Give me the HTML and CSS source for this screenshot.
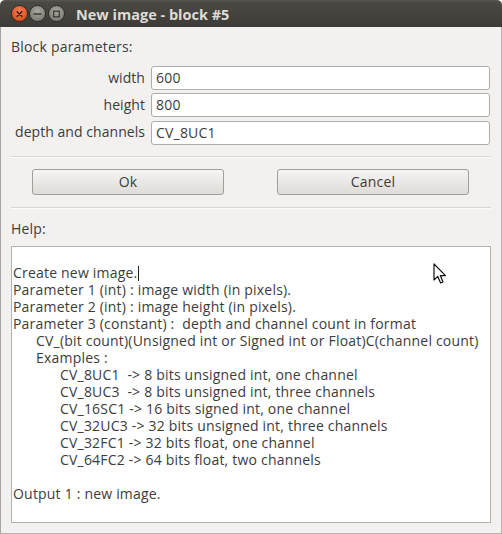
FILE: index.html
```html
<!DOCTYPE html>
<html>
<head>
<meta charset="utf-8">
<link rel="stylesheet" href="styles.css">
</head>
<body>
<div class="window">
  <div class="titlebar">
    <div class="controls">
      <span class="ctl close"><svg width="16" height="16" viewBox="0 0 16 16"><path d="M5.5 5.5 L10.5 10.5 M10.5 5.5 L5.5 10.5" stroke="#3a1a10" stroke-width="1.6" stroke-linecap="round"/></svg></span>
      <span class="ctl mini"><svg width="16" height="16" viewBox="0 0 16 16"><path d="M4.5 8 H11.5" stroke="#3c3b37" stroke-width="1.8" stroke-linecap="round"/></svg></span>
      <span class="ctl maxi"><svg width="16" height="16" viewBox="0 0 16 16"><rect x="5" y="5" width="6" height="6" fill="none" stroke="#3c3b37" stroke-width="1.4"/></svg></span>
    </div>
    <div class="title">New image - block #5</div>
  </div>
  <div class="content">
    <div class="section-label">Block parameters:</div>
    <div class="form">
      <label class="lbl">width</label><div class="input">600</div>
      <label class="lbl">height</label><div class="input">800</div>
      <label class="lbl">depth and channels</label><div class="input">CV_8UC1</div>
    </div>
    <div class="sep"></div>
    <div class="buttons">
      <div class="btn">Ok</div>
      <div class="btn">Cancel</div>
    </div>
    <div class="sep"></div>
    <div class="section-label help-label">Help:</div>
    <div class="helpbox">
      <div class="line">Create new image.<span class="caret"></span></div>
      <div class="line">Parameter 1 (int) : image width (in pixels).</div>
      <div class="line">Parameter 2 (int) : image height (in pixels).</div>
      <div class="line">Parameter 3 (constant) :&nbsp; depth and channel count in format</div>
      <div class="line ind1">CV_(bit count)(Unsigned int or Signed int or Float)C(channel count)</div>
      <div class="line ind1">Examples :</div>
      <div class="line ind2">CV_8UC1&nbsp; -&gt; 8 bits unsigned int, one channel</div>
      <div class="line ind2">CV_8UC3&nbsp; -&gt; 8 bits unsigned int, three channels</div>
      <div class="line ind2">CV_16SC1 -&gt; 16 bits signed int, one channel</div>
      <div class="line ind2">CV_32UC3 -&gt; 32 bits unsigned int, three channels</div>
      <div class="line ind2">CV_32FC1 -&gt; 32 bits float, one channel</div>
      <div class="line ind2">CV_64FC2 -&gt; 64 bits float, two channels</div>
      <div class="line">&nbsp;</div>
      <div class="line">Output 1 : new image.</div>
      <svg class="pointer" width="14" height="22" viewBox="0 0 14 22"><path d="M1 1 L1 17 L4.8 13.4 L7.6 20 L10 19 L7.3 12.6 L12.5 12.6 Z" fill="#ffffff" stroke="#111" stroke-width="1.2" stroke-linejoin="round"/></svg>
    </div>
  </div>
</div>
</body>
</html>
```
FILE: styles.css
```css
* { box-sizing: border-box; }
html, body { margin: 0; padding: 0; background: #ffffff; }
body {
  font-family: "Open Sans", "Noto Sans", "DejaVu Sans", sans-serif;
  font-size: 14px;
  letter-spacing: 0.2px;
  color: #3c3c3c;
}
.window {
  width: 502px;
  height: 534px;
  display: flex;
  flex-direction: column;
  border-radius: 5px 5px 0 0;
  overflow: hidden;
}
.titlebar {
  height: 27px;
  flex: none;
  display: flex;
  align-items: center;
  background: linear-gradient(#55534d 0, #55534d 1px, #4a4944 2px, #3c3b37 27px);
  padding-left: 11px;
}
.controls { display: flex; align-items: center; gap: 1px; }
.ctl {
  width: 17px; height: 17px;
  border-radius: 50%;
  display: flex; align-items: center; justify-content: center;
}
.ctl svg { display: block; }
.close { background: radial-gradient(circle at 50% 35%, #f5825a, #e2501d 70%, #b8400f); border: 1px solid #2e2d29; }
.mini, .maxi { background: radial-gradient(circle at 50% 35%, #a9a69d, #7f7d76 75%); border: 1px solid #2e2d29; }
.maxi { margin-left: 1px; }
.title {
  margin-left: 11px;
  font-weight: bold;
  font-size: 14.5px;
  letter-spacing: 0;
  color: #dfdbd2;
  padding-top: 1px;
}
.content {
  flex: 1;
  background: #f2f1f0;
  border-left: 1px solid #a8a5a0;
  border-right: 1px solid #b8b5b0;
  border-bottom: 1px solid #b8b5b0;
  padding: 0 10px 0 10px;
  display: flex;
  flex-direction: column;
}
.section-label {
  height: 19px;
  line-height: 19px;
  margin-top: 10px;
  color: #3c3c3c;
}
.form {
  display: grid;
  grid-template-columns: 134px 1fr;
  column-gap: 6px;
  row-gap: 3px;
  margin-top: 10px;
  margin-right: 1px;
}
.lbl {
  text-align: right;
  line-height: 24px;
  color: #3c3c3c;
  white-space: nowrap;
  letter-spacing: 0.05px;
}
.input {
  height: 24px;
  line-height: 22px;
  background: #ffffff;
  border: 1px solid #b0ada8;
  border-radius: 3px;
  padding-left: 4px;
  color: #3c3c3c;
}
.form .input:nth-of-type(3) { margin-top: 1px; }
.sep {
  background: #d9d7d3;
  border-bottom: 1px solid #fbfbfa;
  height: 2px;
  margin-top: 11px;
}
.buttons {
  display: flex;
  gap: 53px;
  padding-left: 21px;
  margin-top: 11px;
}
.btn {
  width: 192px;
  height: 26px;
  line-height: 24px;
  text-align: center;
  border: 1px solid #a29f9a;
  border-radius: 3px;
  background: linear-gradient(#f6f5f4, #dedcd8);
  color: #3c3c3c;
}
.buttons + .sep { margin-top: 12px; }
.help-label { margin-top: 10px; }
.helpbox {
  position: relative;
  margin-top: 8px;
  height: 277px;
  background: #ffffff;
  border: 1px solid #b6b3ae;
  padding: 17px 0 0 1px;
}
.line {
  line-height: 17px;
  height: 17px;
  white-space: nowrap;
  color: #3c3c3c;
}
.ind1 { padding-left: 23px; }
.ind2 { padding-left: 47px; }
.caret {
  display: inline-block;
  width: 1px;
  height: 15px;
  background: #222;
  vertical-align: -3px;
  margin-left: 1px;
}
.pointer {
  position: absolute;
  left: 421px;
  top: 16px;
}
```
